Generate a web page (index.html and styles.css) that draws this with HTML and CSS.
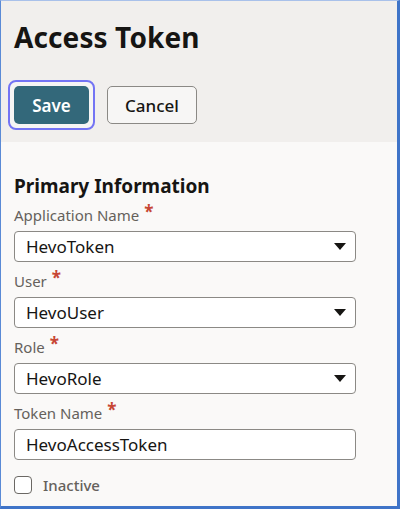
FILE: index.html
```html
<!DOCTYPE html>
<html>
<head>
<meta charset="utf-8">
<link rel="stylesheet" href="styles.css">
</head>
<body>
<div class="frame">
  <header class="header">
    <h1 class="title">Access Token</h1>
    <div class="actions">
      <span class="focus-ring"><button class="btn btn-primary">Save</button></span>
      <button class="btn btn-secondary">Cancel</button>
    </div>
  </header>
  <main class="content">
    <h2 class="section-title">Primary Information</h2>
    <div class="field">
      <label class="label">Application Name<span class="req">*</span></label>
      <div class="select"><span class="value">HevoToken</span><svg class="caret" width="12" height="7" viewBox="0 0 12 7"><path d="M0 0H12L6 7Z" fill="#161513"/></svg></div>
    </div>
    <div class="field">
      <label class="label">User<span class="req">*</span></label>
      <div class="select"><span class="value">HevoUser</span><svg class="caret" width="12" height="7" viewBox="0 0 12 7"><path d="M0 0H12L6 7Z" fill="#161513"/></svg></div>
    </div>
    <div class="field">
      <label class="label">Role<span class="req">*</span></label>
      <div class="select"><span class="value">HevoRole</span><svg class="caret" width="12" height="7" viewBox="0 0 12 7"><path d="M0 0H12L6 7Z" fill="#161513"/></svg></div>
    </div>
    <div class="field">
      <label class="label">Token Name<span class="req">*</span></label>
      <div class="select input"><span class="value">HevoAccessToken</span></div>
    </div>
    <div class="check-row">
      <span class="checkbox"></span>
      <span class="check-label">Inactive</span>
    </div>
  </main>
</div>
</body>
</html>
```
FILE: styles.css
```css
* { box-sizing: border-box; }
html, body { margin: 0; padding: 0; }
body {
  font-family: "Noto Sans", "Open Sans", sans-serif;
  color: #161513;
  width: 400px;
  height: 509px;
  overflow: hidden;
}
.frame {
  width: 400px;
  height: 509px;
  border-left: 1px solid #5a8ad6;
  border-top: 1px solid #a9c1ea;
  border-right: 3px solid #3f74c8;
  border-bottom: 3px solid #3f74c8;
  background: #faf9f8;
  display: flex;
  flex-direction: column;
}
.header {
  background: #f1efed;
  height: 141px;
  padding: 17px 13px 0;
  flex: none;
}
.title {
  margin: 0;
  font-size: 28px;
  font-weight: 700;
  line-height: 38px;
  letter-spacing: 0.1px;
}
.actions {
  margin-top: 24px;
  display: flex;
  align-items: center;
  gap: 12px;
  margin-left: -6px;
}
.focus-ring {
  display: inline-flex;
  padding: 4px;
  border: 2px solid #7474f4;
  border-radius: 8px;
  background: #f6f5f4;
}
.btn {
  font-family: inherit;
  font-size: 17px;
  height: 38px;
  border-radius: 5px;
  padding: 0;
  display: inline-flex;
  align-items: center;
  justify-content: center;
}
.btn-primary {
  width: 75px;
  background: #33687a;
  color: #ffffff;
  border: none;
  font-weight: 600;
}
.btn-secondary {
  width: 90px;
  background: #f7f6f5;
  color: #161513;
  border: 1px solid #8b8985;
  font-weight: 500;
}
.content {
  padding: 31px 13px 0;
  display: flex;
  flex-direction: column;
}
.section-title {
  margin: 0;
  font-size: 19px;
  font-weight: 700;
  line-height: 26px;
}
.field {
  display: flex;
  flex-direction: column;
}
.label {
  font-size: 15px;
  color: #65615c;
  line-height: 20px;
  margin-top: 6px;
  margin-bottom: 6px;
}
.field + .field .label { margin-top: 9px; }
.req {
  display: inline-block;
  margin-left: 5px;
  color: #c74634;
  font-size: 17px;
  font-weight: 700;
  line-height: 12px;
  vertical-align: 3px;
}
.select {
  width: 342px;
  height: 31px;
  background: #ffffff;
  border: 1px solid #8b8985;
  border-radius: 4px;
  display: flex;
  align-items: center;
  padding: 0 8px 0 11px;
}
.value {
  flex: 1;
  font-size: 17px;
  color: #161513;
}
.caret { flex: none; margin-right: 1px; }
.check-row {
  display: flex;
  align-items: center;
  gap: 11px;
  margin-top: 15px;
}
.checkbox {
  width: 18px;
  height: 18px;
  border: 1.5px solid #6b6864;
  border-radius: 4px;
  background: #ffffff;
}
.check-label {
  font-size: 15px;
  color: #65615c;
  font-weight: 500;
}
```
